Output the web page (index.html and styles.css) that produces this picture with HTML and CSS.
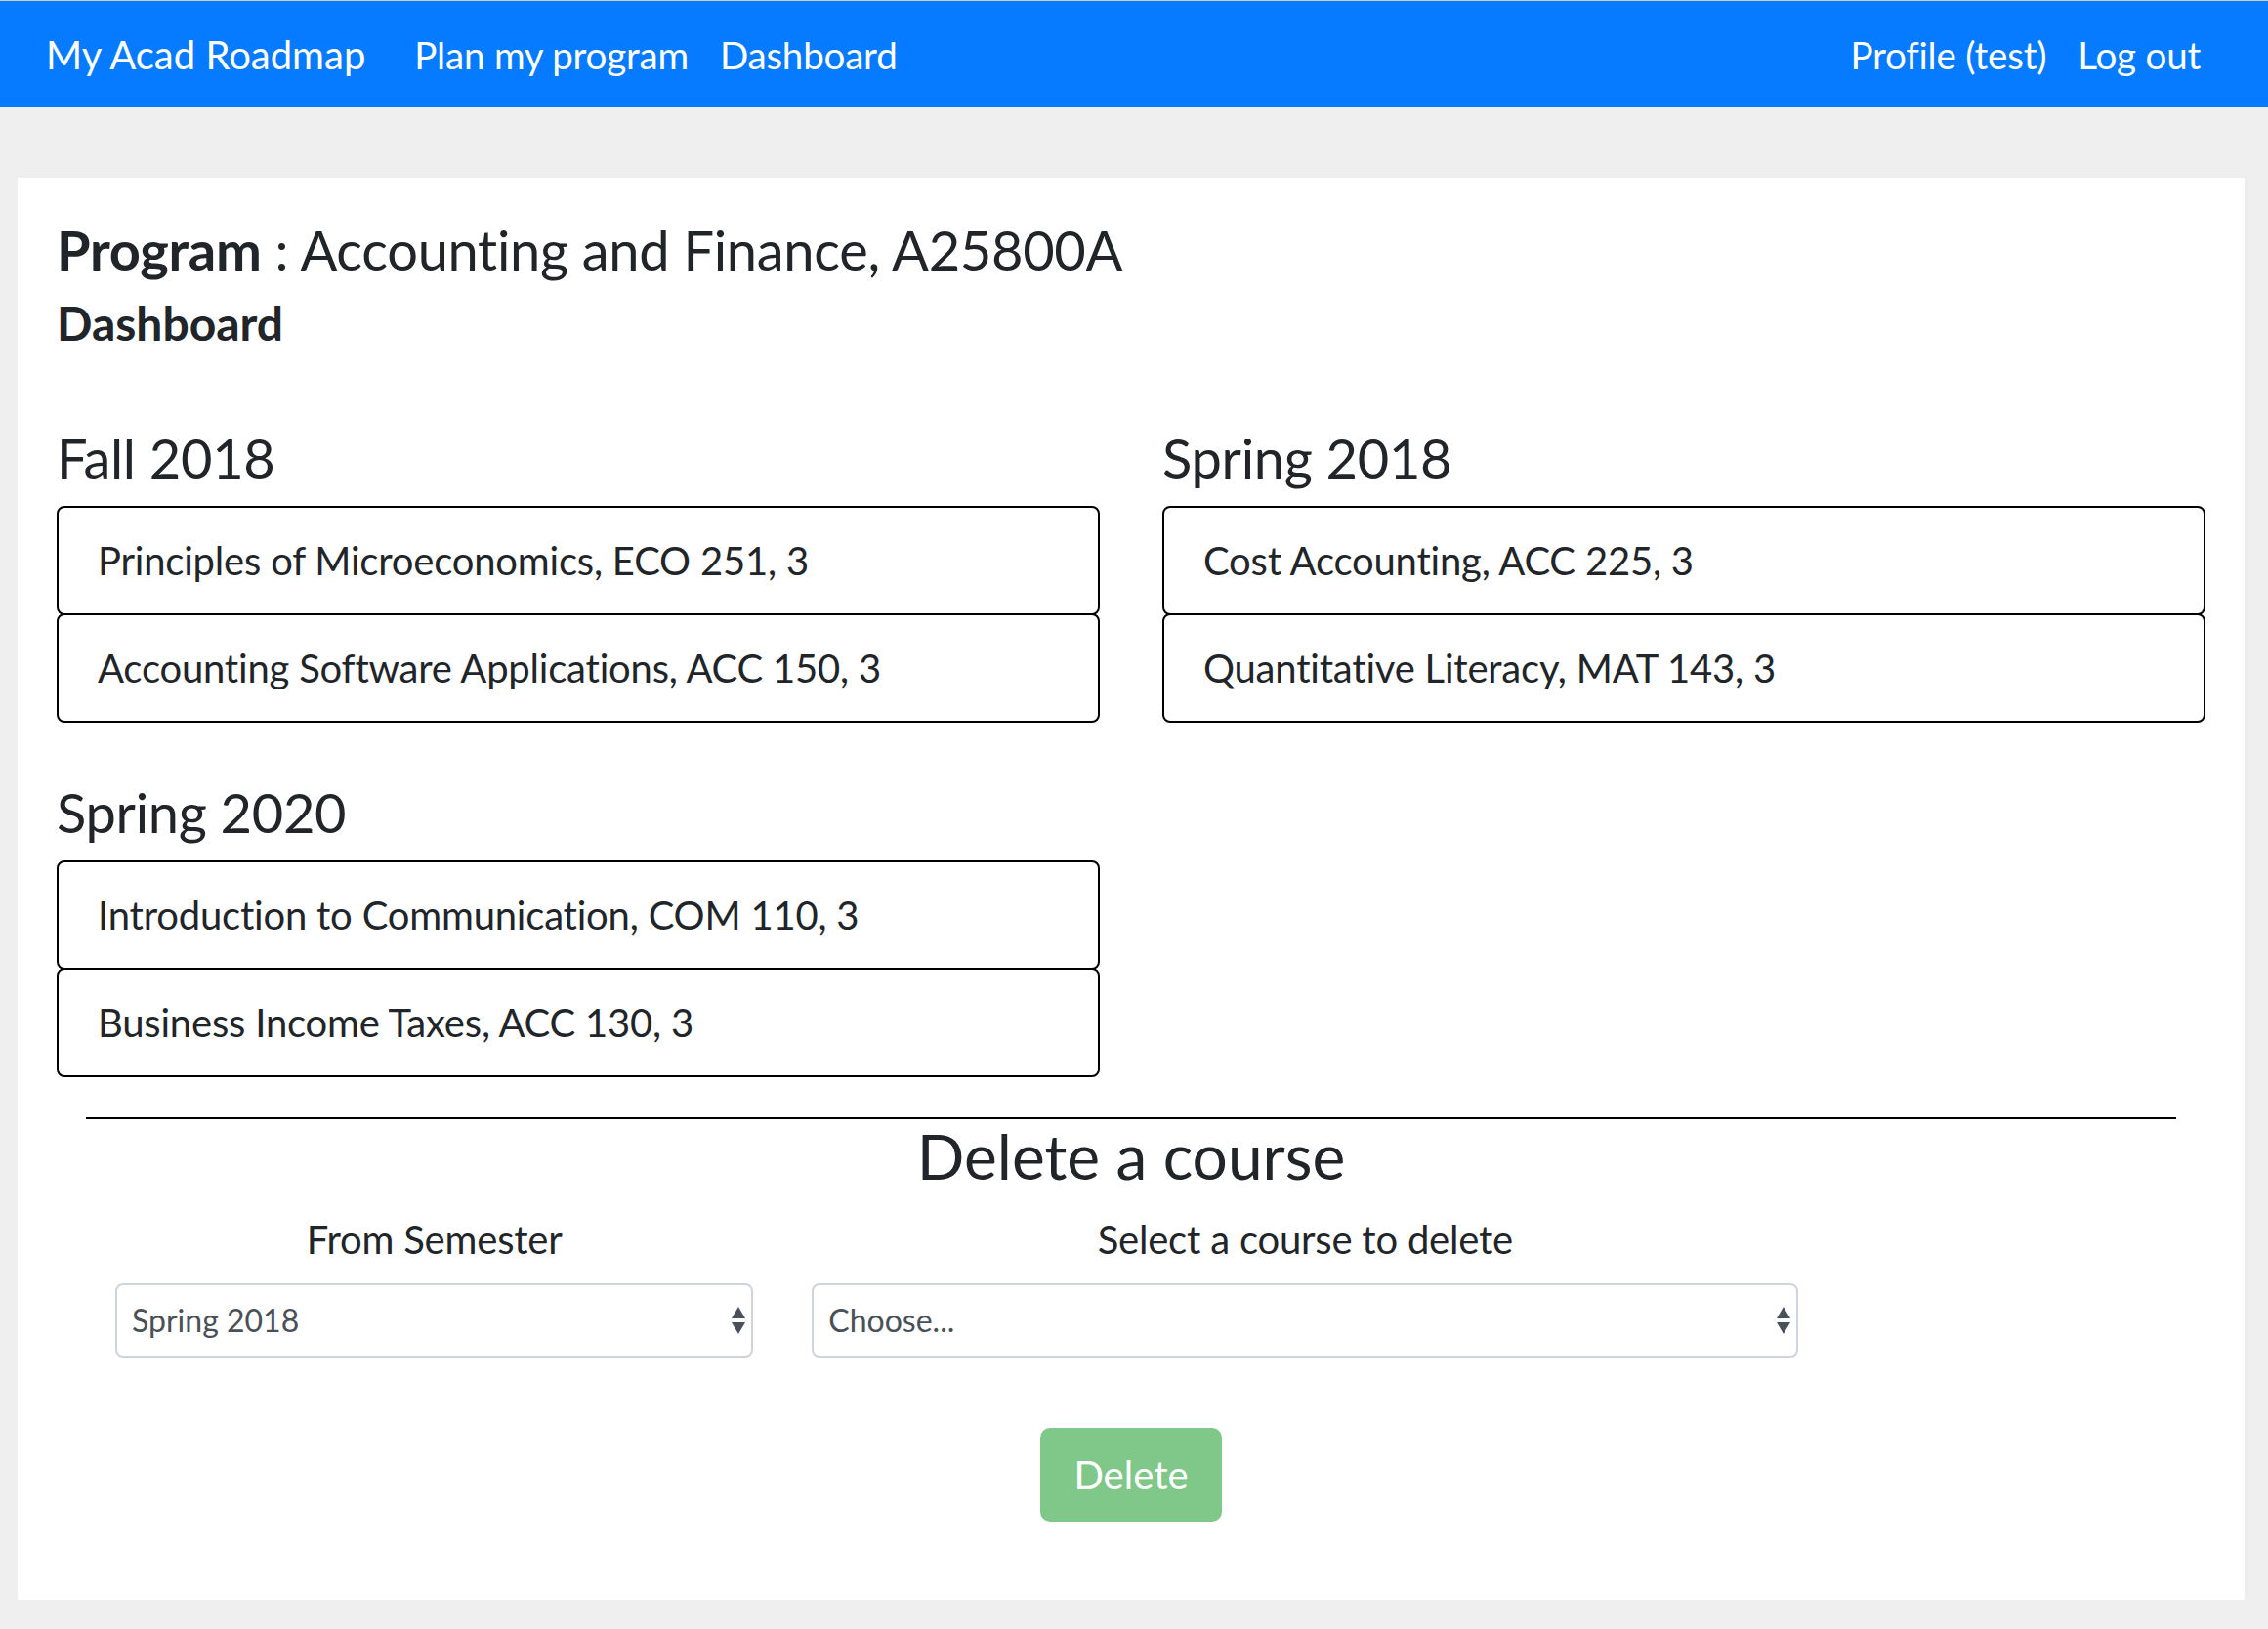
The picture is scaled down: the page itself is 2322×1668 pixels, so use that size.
FILE: index.html
```html
<!DOCTYPE html>
<html lang="en">
<head>
<meta charset="utf-8">
<title>My Acad Roadmap - Dashboard</title>
<link rel="stylesheet" href="styles.css">
</head>
<body>
<nav class="navbar">
  <a class="brand" href="#">My Acad Roadmap</a>
  <ul class="nav-left">
    <li><a href="#">Plan my program</a></li>
    <li><a href="#">Dashboard</a></li>
  </ul>
  <ul class="nav-right">
    <li><a href="#">Profile (test)</a></li>
    <li><a href="#">Log out</a></li>
  </ul>
</nav>

<main class="page">
  <section class="card">
    <h3 class="program"><b>Program</b> : Accounting and Finance, A25800A</h3>
    <h4 class="subtitle">Dashboard</h4>

    <div class="semesters">
      <div class="semester">
        <h3 class="sem-title">Fall 2018</h3>
        <ul class="courses">
          <li>Principles of Microeconomics, ECO 251, 3</li>
          <li>Accounting Software Applications, ACC 150, 3</li>
        </ul>
      </div>
      <div class="semester">
        <h3 class="sem-title">Spring 2018</h3>
        <ul class="courses">
          <li>Cost Accounting, ACC 225, 3</li>
          <li>Quantitative Literacy, MAT 143, 3</li>
        </ul>
      </div>
      <div class="semester">
        <h3 class="sem-title">Spring 2020</h3>
        <ul class="courses">
          <li>Introduction to Communication, COM 110, 3</li>
          <li>Business Income Taxes, ACC 130, 3</li>
        </ul>
      </div>
    </div>

    <div class="delete-section">
      <h2 class="delete-title">Delete a course</h2>
      <div class="form-row">
        <div class="field">
          <label class="field-label" for="sem">From Semester</label>
          <div class="select-wrap">
            <select id="sem" class="select">
              <option>Spring 2018</option>
              <option>Fall 2018</option>
              <option>Spring 2020</option>
            </select>
            <svg class="arrows" width="18" height="30" viewBox="0 0 18 30"><path d="M9 1 L16 13 L2 13 Z" fill="#495057"/><path d="M2 17 L16 17 L9 29 Z" fill="#495057"/></svg>
          </div>
        </div>
        <div class="field">
          <label class="field-label" for="course">Select a course to delete</label>
          <div class="select-wrap">
            <select id="course" class="select">
              <option>Choose...</option>
            </select>
            <svg class="arrows" width="18" height="30" viewBox="0 0 18 30"><path d="M9 1 L16 13 L2 13 Z" fill="#495057"/><path d="M2 17 L16 17 L9 29 Z" fill="#495057"/></svg>
          </div>
        </div>
      </div>
      <div class="actions">
        <button class="btn-delete" type="button" disabled>Delete</button>
      </div>
    </div>
  </section>
</main>
</body>
</html>
```

FILE: styles.css
```css
* {
  box-sizing: border-box;
}

html, body {
  margin: 0;
  padding: 0;
}

body {
  background: #efefef;
  font-family: Lato, "Liberation Sans", sans-serif;
  color: #212529;
  border-top: 1px solid #cccccc;
}

a {
  text-decoration: none;
  color: inherit;
}

/* Navbar */
.navbar {
  height: 109px;
  background: #077bff;
  display: flex;
  align-items: center;
  padding: 0 69px 0 47px;
}

.brand {
  color: #ffffff;
  font-size: 40px;
  line-height: 60px;
  margin-right: 34px;
}

.nav-left,
.nav-right {
  list-style: none;
  margin: 0;
  padding: 0;
  display: flex;
}

.nav-left li a,
.nav-right li a {
  display: block;
  color: #ffffff;
  font-size: 38.5px;
  line-height: 60px;
  letter-spacing: -0.2px;
  padding: 0 16px;
}

.nav-right {
  margin-left: auto;
}

.nav-right li:last-child a {
  padding-right: 0;
}

/* Page */
.page {
  padding: 72px 24px 30px 18px;
}

.card {
  background: #ffffff;
  padding: 40px 40px 80px 40px;
}

.program {
  margin: 0 0 13px 0;
  font-size: 56px;
  line-height: 1.2;
  font-weight: 400;
  letter-spacing: -0.3px;
}

.program b {
  font-weight: 700;
}

.subtitle {
  margin: 0;
  font-size: 48px;
  line-height: 1.2;
  font-weight: 700;
}

.semesters {
  margin-top: 75px;
  display: grid;
  grid-template-columns: 1fr 1fr;
  column-gap: 64px;
  row-gap: 58px;
}

.sem-title {
  margin: 0 0 16px 0;
  font-size: 56px;
  line-height: 1.2;
  font-weight: 400;
  letter-spacing: -0.3px;
}

.courses {
  list-style: none;
  margin: 0;
  padding: 0;
}

.courses li {
  border: 2px solid #000000;
  border-radius: 8px;
  padding: 24px 40px;
  font-size: 40px;
  line-height: 60px;
  letter-spacing: -0.2px;
  color: #212529;
}

.courses li + li {
  margin-top: -2px;
}

/* Delete section */
.delete-section {
  margin: 41px 30px 0 30px;
  border-top: 2px solid #000000;
}

.delete-title {
  margin: 0;
  text-align: center;
  font-size: 64px;
  line-height: 1.2;
  font-weight: 400;
}

.form-row {
  margin-top: 16px;
  display: grid;
  grid-template-columns: 4fr 6fr 2fr;
}

.field {
  padding: 0 30px;
  display: flex;
  flex-direction: column;
}

.field-label {
  text-align: center;
  font-size: 40px;
  line-height: 60px;
  letter-spacing: -0.2px;
  margin-bottom: 15px;
}

.select-wrap {
  position: relative;
}

.select {
  display: block;
  width: 100%;
  height: 76px;
  -webkit-appearance: none;
  appearance: none;
  border: 2px solid #ced4da;
  border-radius: 8px;
  background: #ffffff;
  font-family: Lato, "Liberation Sans", sans-serif;
  font-size: 32px;
  color: #495057;
  padding: 0 40px 0 15px;
}

.arrows {
  position: absolute;
  right: 6px;
  top: 23px;
  pointer-events: none;
}

.actions {
  margin-top: 72px;
  display: flex;
  justify-content: center;
}

.btn-delete {
  font-family: Lato, "Liberation Sans", sans-serif;
  font-size: 40px;
  line-height: 60px;
  padding: 16px 32px;
  color: #ffffff;
  background: #80c88a;
  border: 2px solid #80c88a;
  border-radius: 10px;
}
```
